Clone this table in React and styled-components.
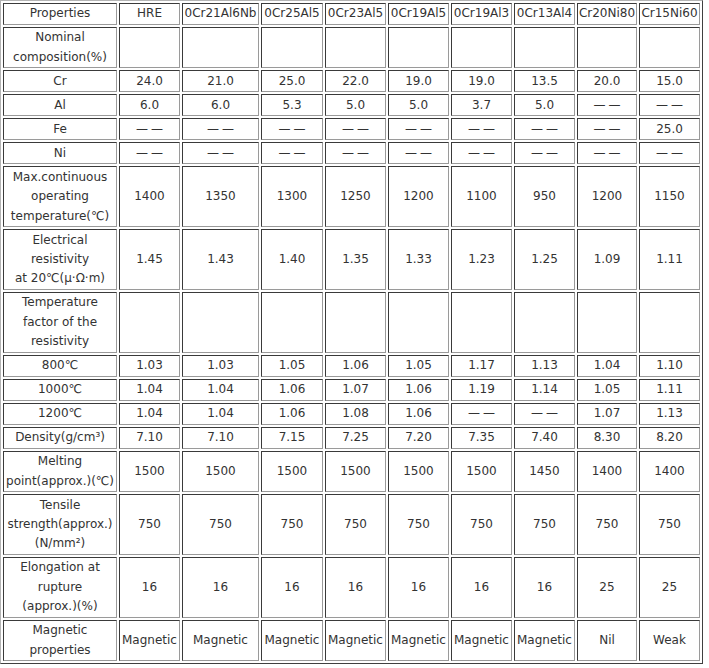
import React from "react";
import styled, { createGlobalStyle } from "styled-components";

const GlobalStyle = createGlobalStyle`
  html, body {
    margin: 0;
    padding: 0;
    background: #fff;
  }
  * {
    box-sizing: border-box;
  }
`;

const Table = styled.div`
  display: grid;
  grid-template-columns: 114px 61px 77px 62px 61px 61px 61px 61px 60px 61px;
  gap: 2px;
  padding: 2px;
  width: 703px;
  border: 1px solid;
  border-color: #b4b4b4 #404040 #404040 #b4b4b4;
  font-family: "DejaVu Sans", Verdana, sans-serif;
  font-size: 12px;
  color: #333;
`;

const Cell = styled.div`
  display: flex;
  align-items: center;
  justify-content: center;
  text-align: center;
  padding: 0.3px 1px;
  line-height: 19.4px;
  min-height: 22px;
  border: 1px solid;
  border-color: #3a3a3a #9a9a9a #9a9a9a #3a3a3a;
  white-space: ${(p) => (p.$nowrap ? "nowrap" : "normal")};
`;

const Dash = styled.span`
  letter-spacing: 3px;
  margin-right: -3px;
`;

const D = "——";

const header = [
  "Properties",
  "HRE",
  "0Cr21Al6Nb",
  "0Cr25Al5",
  "0Cr23Al5",
  "0Cr19Al5",
  "0Cr19Al3",
  "0Cr13Al4",
  "Cr20Ni80",
  "Cr15Ni60",
];

const blank = Array(9).fill("");

const rows = [
  [["Nominal", "composition(%)"], blank],
  [["Cr"], ["24.0", "21.0", "25.0", "22.0", "19.0", "19.0", "13.5", "20.0", "15.0"]],
  [["Al"], ["6.0", "6.0", "5.3", "5.0", "5.0", "3.7", "5.0", D, D]],
  [["Fe"], [D, D, D, D, D, D, D, D, "25.0"]],
  [["Ni"], Array(9).fill(D)],
  [
    ["Max.continuous", "operating", "temperature(℃)"],
    ["1400", "1350", "1300", "1250", "1200", "1100", "950", "1200", "1150"],
  ],
  [
    ["Electrical", "resistivity", "at 20℃(μ·Ω·m)"],
    ["1.45", "1.43", "1.40", "1.35", "1.33", "1.23", "1.25", "1.09", "1.11"],
  ],
  [["Temperature", "factor of the", "resistivity"], blank],
  [["800℃"], ["1.03", "1.03", "1.05", "1.06", "1.05", "1.17", "1.13", "1.04", "1.10"]],
  [["1000℃"], ["1.04", "1.04", "1.06", "1.07", "1.06", "1.19", "1.14", "1.05", "1.11"]],
  [["1200℃"], ["1.04", "1.04", "1.06", "1.08", "1.06", D, D, "1.07", "1.13"]],
  [["Density(g/cm³)"], ["7.10", "7.10", "7.15", "7.25", "7.20", "7.35", "7.40", "8.30", "8.20"]],
  [
    ["Melting", "point(approx.)(℃)"],
    ["1500", "1500", "1500", "1500", "1500", "1500", "1450", "1400", "1400"],
  ],
  [["Tensile", "strength(approx.)", "(N/mm²)"], Array(9).fill("750")],
  [
    ["Elongation at", "rupture", "(approx.)(%)"],
    ["16", "16", "16", "16", "16", "16", "16", "25", "25"],
  ],
  [
    ["Magnetic", "properties"],
    [
      "Magnetic",
      "Magnetic",
      "Magnetic",
      "Magnetic",
      "Magnetic",
      "Magnetic",
      "Magnetic",
      "Nil",
      "Weak",
    ],
  ],
];

const Value = ({ v }) => (v === D ? <Dash>{v}</Dash> : v);

const App = () => {
  return (
    <>
      <GlobalStyle />
      <Table>
        {header.map((h) => (
          <Cell key={h} $nowrap>
            {h}
          </Cell>
        ))}
        {rows.map(([label, values], r) => (
          <React.Fragment key={r}>
            <Cell>
              <span>
                {label.map((line, i) => (
                  <React.Fragment key={i}>
                    {i > 0 && <br />}
                    {line}
                  </React.Fragment>
                ))}
              </span>
            </Cell>
            {values.map((v, c) => (
              <Cell key={c} $nowrap>
                <Value v={v} />
              </Cell>
            ))}
          </React.Fragment>
        ))}
      </Table>
    </>
  );
};

export default App;
